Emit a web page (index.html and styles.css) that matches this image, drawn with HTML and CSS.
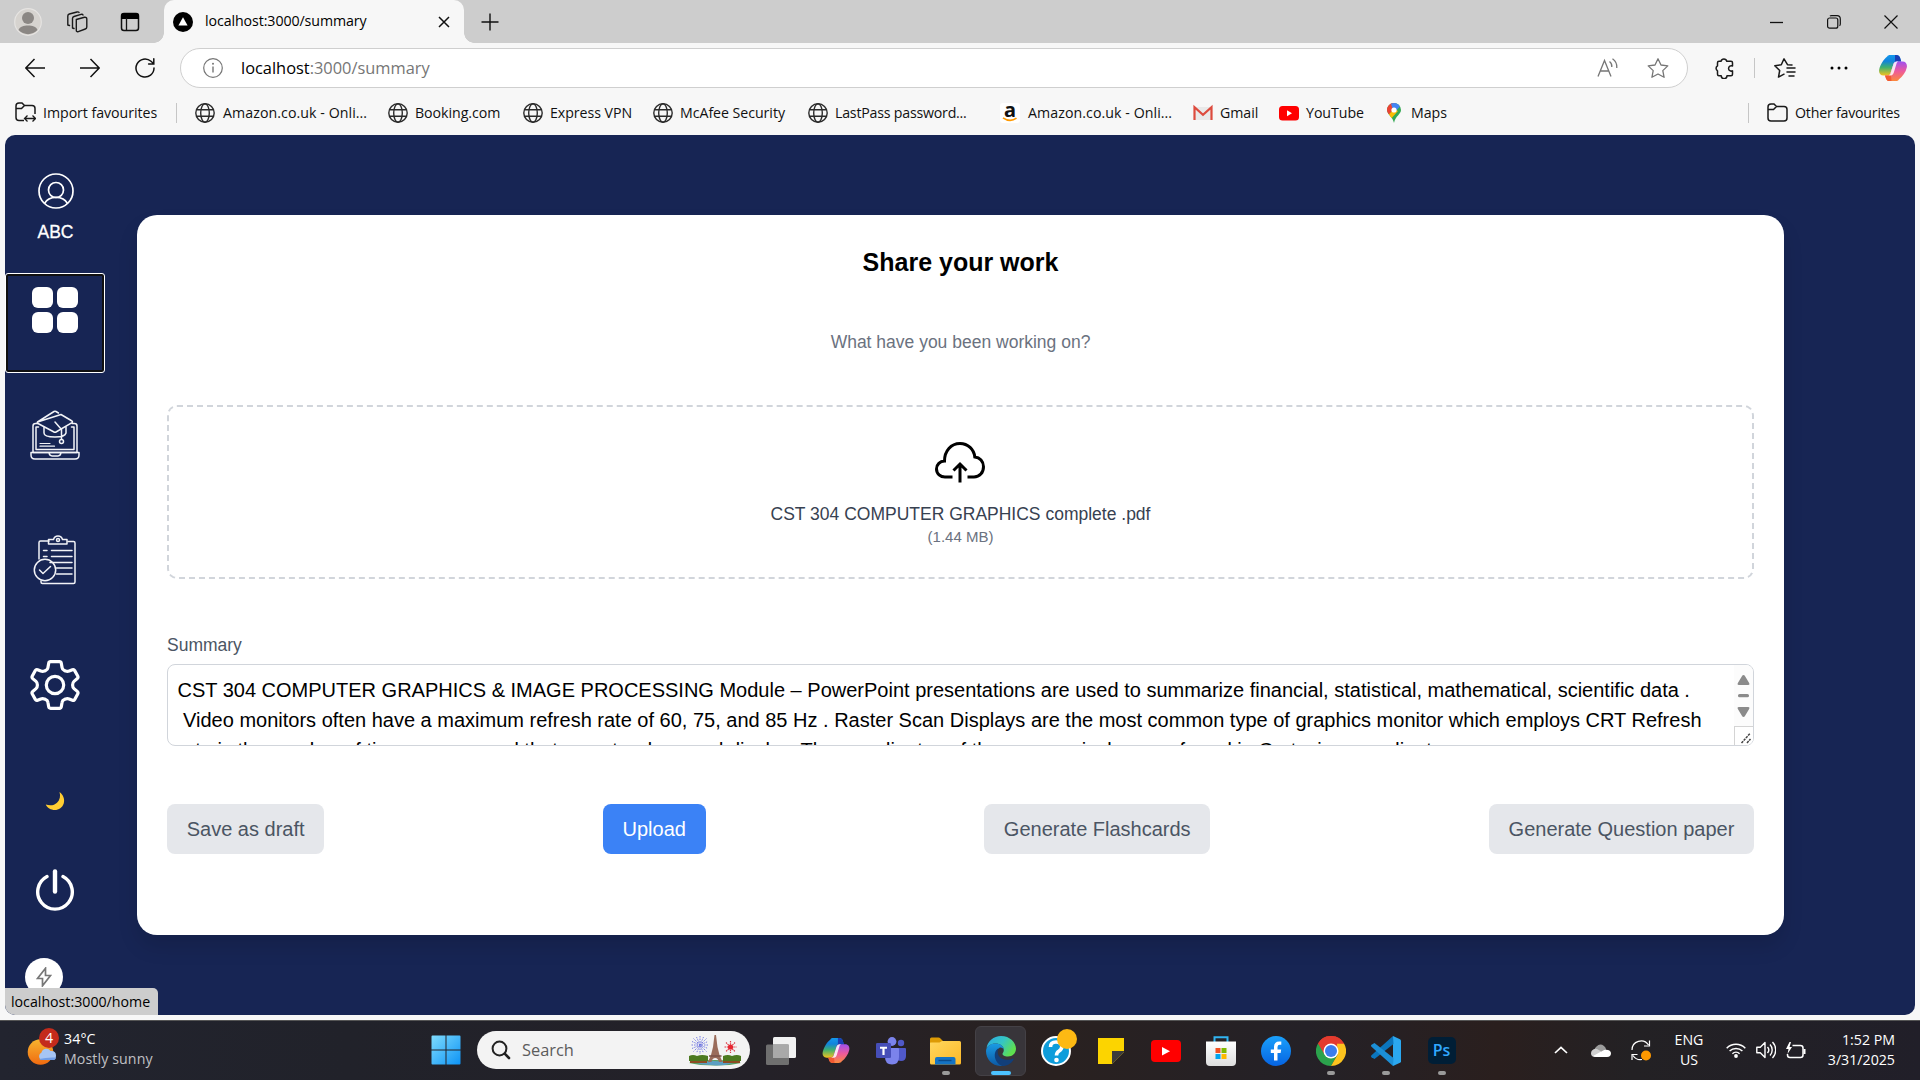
FILE: index.html
```html
<!DOCTYPE html>
<html lang="en">
<head>
<meta charset="utf-8">
<title>localhost:3000/summary</title>
<link rel="stylesheet" href="styles.css">
</head>
<body>
<svg class="defs" width="0" height="0">
  <defs>
    <linearGradient id="cpA" x1="0" y1="0" x2="0" y2="1"><stop offset="0" stop-color="#1398ec"/><stop offset=".3" stop-color="#1183dc"/><stop offset=".6" stop-color="#3fb070"/><stop offset="1" stop-color="#f4c21c"/></linearGradient>
    <linearGradient id="cpB" x1="0" y1="0" x2="0" y2="1"><stop offset="0" stop-color="#a050ee"/><stop offset=".5" stop-color="#ee5a9b"/><stop offset="1" stop-color="#fb8a3c"/></linearGradient>
    <linearGradient id="win" x1="0" y1="0" x2="1" y2="1"><stop offset="0" stop-color="#7fdcfd"/><stop offset="1" stop-color="#0d93f5"/></linearGradient>
    <linearGradient id="fold" x1="0" y1="0" x2="1" y2="1"><stop offset="0" stop-color="#ffd75e"/><stop offset="1" stop-color="#fdb928"/></linearGradient>
    <linearGradient id="edgeA" x1="0" y1="0" x2="1" y2=".5"><stop offset="0" stop-color="#2aa9e6"/><stop offset=".55" stop-color="#35c5c4"/><stop offset="1" stop-color="#5fe04f"/></linearGradient>
    <linearGradient id="edgeB" x1="0" y1="0" x2="0" y2="1"><stop offset="0" stop-color="#1a9be4"/><stop offset="1" stop-color="#0c59a4"/></linearGradient>
    <linearGradient id="sun" x1="0" y1="0" x2="0" y2="1"><stop offset="0" stop-color="#f7b52f"/><stop offset="1" stop-color="#f06a10"/></linearGradient>
    <linearGradient id="fb" x1="0" y1="0" x2="0" y2="1"><stop offset="0" stop-color="#1aa0fb"/><stop offset="1" stop-color="#0664e2"/></linearGradient>
    <linearGradient id="bag" x1="0" y1="0" x2="0" y2="1"><stop offset="0" stop-color="#fff"/><stop offset="1" stop-color="#dedede"/></linearGradient>
    <symbol id="globe" viewBox="0 0 20 20"><g fill="none" stroke="#2b2b2b" stroke-width="1.4"><circle cx="10" cy="10" r="9.2"/><ellipse cx="10" cy="10" rx="4.3" ry="9.2"/><path d="M1.5 6.7h17M1.5 13.3h17"/></g></symbol>
    <symbol id="copilot" viewBox="0 0 28 26">
      <path d="M8.200 1.500c.5-1 1.500-1.500 3-1.500h6.300c1.900 0 2.900.9 3.500 2.600l1.200 4h-4.300c-2 0-2.900.8-3.400 2.500l-2.800 8.600c-.6 2-1.700 2.800-3.600 2.800H4.500C1.300 20.500-.5 18 .2 14.600 1.200 10 4.300 4.500 8.200 1.500z" fill="url(#cpA)"/>
      <path d="M16 0h1.500c1.900 0 2.900.9 3.500 2.600l1.200 4h-4.300c-.7 0-1.400.1-1.900.5z" fill="#1a3fb5"/>
      <path d="M19.800 24.500c-.5 1-1.500 1.500-3 1.500h-6.300c-1.900 0-2.900-.9-3.500-2.600l-1-2.900h2.100c1.900 0 3-.8 3.600-2.800l2.800-8.600c.5-1.700 1.400-2.500 3.400-2.500h5.600c3.200 0 5 2.500 4.300 5.900-1 4.600-4.100 9-8 12z" fill="url(#cpB)"/>
      <path d="M6 20.500h2.100c1.900 0 3-.8 3.600-2.800L12.500 26h-2c-1.900 0-2.900-.9-3.500-2.600z" fill="#f25a32"/>
      <path d="M15.800 7.300c.6-.5 1.200-.7 2.100-.7h1.300c-1 .6-1.500 1.300-1.800 2.500l-2.500 8.200c-.6 2-1.500 3.200-3.200 3.200H8.400c1.700 0 2.700-.9 3.300-2.800l2.800-8.600c.3-.9.700-1.500 1.300-1.800z" fill="#fff" opacity=".85"/>
    </symbol>
  </defs>
</svg>
<div class="screen">
  <header class="tabstrip">
    <svg class="ic-profile" width="28" height="28" viewBox="0 0 28 28"><circle cx="14" cy="14" r="13.300" fill="#d6d3cf" stroke="#e6e4e2" stroke-width="1.2"/><circle cx="14" cy="10" r="6" fill="#8b8784"/><path d="M4.500 22c1.500-3.500 5-4.500 9.500-4.500s8 1 9.500 4.500a13 13 0 0 1-19 0z" fill="#8b8784"/></svg>
    <svg class="ic-work" width="22" height="22" viewBox="0 0 22 22" fill="none" stroke="#1a1a1a" stroke-width="1.400" stroke-linejoin="round" stroke-linecap="round"><path d="M10.300 8.500 18.500 6.300Q20.800 6 20.800 8v8q0 1.500-1.500 2l-7 2.600q-2 .6-2-1.400z"/><path d="M8 17.500 6.500 17V7.500q0-1.500 1.500-2l7-2.200q1.500-.5 2 .8"/><path d="M3.500 14.500 1.800 14V5q0-1.500 1.500-2L11 1q1.500-.4 2 .4"/></svg>
    <svg class="ic-vtab" width="20" height="20" viewBox="0 0 20 20"><rect x="1.500" y="1.500" width="17" height="17" rx="2.500" fill="none" stroke="#111" stroke-width="1.500"/><path d="M1 7V4q0-3 3-3h12q3 0 3 3v3z" fill="#000"/><path d="M6.500 6v12.500" stroke="#111" stroke-width="1.300"/></svg>
    <div class="tab">
      <svg width="20" height="20" viewBox="0 0 20 20"><circle cx="10" cy="10" r="10" fill="#000"/><path d="M10 5.300 14.600 13.500H5.400z" fill="#fff"/></svg>
      <span class="ui tab-title">localhost:3000/summary</span>
      <svg class="tab-x" width="12" height="12" viewBox="0 0 12 12"><path d="M1 1l10 10M11 1 1 11" stroke="#111" stroke-width="1.500"/></svg>
    </div>
    <svg class="ic-plus" width="18" height="18" viewBox="0 0 18 18"><path d="M9 .5v17M.5 9h17" stroke="#111" stroke-width="1.400"/></svg>
    <div class="winctl">
      <svg width="14" height="14" viewBox="0 0 14 14"><path d="M0 7.500h13" stroke="#111" stroke-width="1.300"/></svg>
      <svg width="14" height="14" viewBox="0 0 14 14" fill="none" stroke="#111" stroke-width="1.200"><rect x=".6" y="3" width="10.200" height="10.200" rx="2"/><path d="M3 1.200q.5-.6 1.500-.6H10q3.300 0 3.300 3.300V9q0 1.200-.8 1.800"/></svg>
      <svg width="14" height="14" viewBox="0 0 14 14"><path d="M.5.5l13 13M13.500.5l-13 13" stroke="#111" stroke-width="1.200"/></svg>
    </div>
  </header>

  <div class="toolbar">
    <svg width="20" height="20" viewBox="0 0 20 20" fill="none" stroke="#111" stroke-width="1.500"><path d="M20 10H1M9.500 1 .8 10l8.700 9"/></svg>
    <svg width="20" height="20" viewBox="0 0 20 20" fill="none" stroke="#111" stroke-width="1.500"><path d="M0 10h19M10.500 1l8.700 9-8.700 9"/></svg>
    <svg width="20" height="20" viewBox="0 0 20 20" fill="none" stroke="#111" stroke-width="1.500" stroke-linecap="round"><path d="M19 10a9 9 0 1 1-3-6.700L18.500 5.500M18.800.8v5.100h-5.200"/></svg>
    <div class="address">
      <svg width="20" height="20" viewBox="0 0 20 20"><circle cx="10" cy="10" r="9.300" fill="none" stroke="#767676" stroke-width="1.200"/><path d="M10 8.500v6" stroke="#767676" stroke-width="1.400"/><circle cx="10" cy="5.800" r="1" fill="#767676"/></svg>
      <span class="ui url"><b>localhost</b>:3000/summary</span>
      <svg class="read" width="22" height="20" viewBox="0 0 22 20" fill="none" stroke="#767676" stroke-width="1.300"><path d="M1 18.500 7.500 2.500 14 18.500M3.300 13h8.400"/><path d="M12.500 3.500a6 6 0 0 1 2.300 5.500M15.500.8a10 10 0 0 1 4.300 9.200"/></svg>
      <svg width="22" height="20" viewBox="0 0 22 20" fill="none" stroke="#767676" stroke-width="1.300" stroke-linejoin="round"><path d="M11 .8l3 6.200 6.800.9-5 4.700 1.300 6.700L11 16l-6.100 3.300 1.300-6.700-5-4.700L8 7z"/></svg>
    </div>
    <svg class="ext" width="22" height="22" viewBox="0 0 22 22" fill="none" stroke="#1a1a1a" stroke-width="1.500" stroke-linejoin="round"><path d="M7 4.300a3 3 0 0 1 5.800 0H17q1.500 0 1.500 1.500V9a2.700 2.700 0 1 0 0 4.800v3.500q0 1.500-1.500 1.500h-4a2.900 2.900 0 0 1-5.800 0H5q-1.500 0-1.500-1.500v-3.500a2.900 2.900 0 0 1 0-5V5.800q0-1.500 1.500-1.500z"/></svg>
    <i class="vline"></i>
    <svg class="favs" width="22" height="20" viewBox="0 0 22 20" fill="none" stroke="#1a1a1a" stroke-width="1.500" stroke-linejoin="round" stroke-linecap="round"><path d="M18 7l-4.500-.3L10 .8 7.300 6.800.8 7.800l4.900 4.700-1.200 6.600L10 16.200"/><path d="M13 10h8M13 14h8M15 18h5"/></svg>
    <svg class="dots" width="18" height="4" viewBox="0 0 18 4"><circle cx="2" cy="2" r="1.500"/><circle cx="9" cy="2" r="1.500"/><circle cx="16" cy="2" r="1.500"/></svg>
    <svg class="cop" width="28" height="26"><use href="#copilot"/></svg>
  </div>

  <nav class="bookmarks ui">
    <a class="bm"><svg width="21" height="21" viewBox="0 0 21 21" fill="none" stroke="#1a1a1a" stroke-width="1.500"><path d="M9 18.500H4q-3 0-3-3V4q0-3 3-3h3l2.500 2.500H17q3 0 3 3V12M1 6.500h5.500L9.500 3.500"/><path d="M10 16.500h10.500M12.500 13.500l-3 3 3 3M17.500 13.500l3 3-3 3" stroke-width="1.300"/></svg>Import favourites</a>
    <i class="vline"></i>
    <a class="bm wide"><svg width="20" height="20"><use href="#globe"/></svg>Amazon.co.uk - Onli...</a>
    <a class="bm"><svg width="20" height="20"><use href="#globe"/></svg>Booking.com</a>
    <a class="bm"><svg width="20" height="20"><use href="#globe"/></svg>Express VPN</a>
    <a class="bm"><svg width="20" height="20"><use href="#globe"/></svg>McAfee Security</a>
    <a class="bm narrow"><svg width="20" height="20"><use href="#globe"/></svg>LastPass password...</a>
    <a class="bm wide"><span class="amz">a<svg width="16" height="5" viewBox="0 0 16 5"><path d="M1 .8q7 5 13.500.4" fill="none" stroke="#f90" stroke-width="1.600"/></svg></span>Amazon.co.uk - Onli...</a>
    <a class="bm"><svg width="20" height="20" viewBox="0 0 20 20"><path d="M2 4h16v13H2z" fill="#e9e9e9"/><path d="M1.500 17V4.300L10 11.800 18.500 4.300V17" fill="none" stroke="#dd4b3e" stroke-width="2.200"/></svg>Gmail</a>
    <a class="bm"><svg width="20" height="20" viewBox="0 0 20 20"><rect y="3" width="20" height="14.500" rx="3.500" fill="#f00"/><path d="M8 7.200v6l5-3z" fill="#fff"/></svg>YouTube</a>
    <a class="bm maps"><svg width="14" height="20" viewBox="0 0 14 20"><path d="M7 0a7 7 0 0 1 7 7c0 4-5.500 6-7 13C6 14 0 11.500 0 7a7 7 0 0 1 7-7z" fill="#34a853"/><path d="M1.600 2.500A7 7 0 0 1 9 .3L2.500 12C1 10 0 9 0 7q0-2.700 1.600-4.500z" fill="#ea4335"/><path d="M4 .7A7 7 0 0 1 13 3.500L7 10z" fill="#4285f4"/><path d="M2 11.300 7 6l4 2-6.500 7.300z" fill="#fbbc04"/><circle cx="7" cy="7" r="2.600" fill="#fff"/></svg>Maps</a>
    <span></span>
    <i class="vline"></i>
    <a class="bm narrow"><svg width="21" height="19" viewBox="0 0 21 19" fill="none" stroke="#1a1a1a" stroke-width="1.500"><path d="M1 15V4q0-3 3-3h3l2.500 2.500H17q3 0 3 3V15q0 3-3 3H4q-3 0-3-3zM1 6.500h5.500L9.500 3.500"/></svg>Other favourites</a>
  </nav>

  <main class="page">
    <aside class="side">
      <div class="user">
        <svg width="36" height="36" viewBox="0 0 36 36" fill="none" stroke="#fff" stroke-width="1.700"><circle cx="18" cy="18" r="17"/><circle cx="18" cy="17" r="7.500"/><path d="M6.500 30.500C8.500 26.500 13 24.300 18 24.300s9.500 2.200 11.500 6.200"/></svg>
        <span>ABC</span>
      </div>
      <a class="nav focus"><svg width="50" height="50" viewBox="0 0 50 50" fill="#fff"><rect x="2" y="2" width="21" height="21" rx="6"/><rect x="27" y="2" width="21" height="21" rx="6"/><rect x="2" y="27" width="21" height="21" rx="6"/><rect x="27" y="27" width="21" height="21" rx="6"/></svg></a>
      <a class="nav"><svg width="50" height="50" viewBox="0 0 50 50" fill="none" stroke="#f2f3f7" stroke-width="1.500" stroke-linejoin="round" stroke-linecap="round"><path d="M8 13.500H5.500Q3 13.500 3 16v26.500h44V16q0-2.500-2.500-2.500H42"/><path d="M8.500 17H6v22.500h38V17h-2.500"/><path d="M1 42.500v2.500q0 4 4 4h40q4 0 4-4v-2.500zM19 42.700q.5 3.200 3 3.200h6q2.500 0 3-3.200"/><path d="M7.500 12 24 1.500q1-.6 2 0l2.500 1.500M31 4.500 42 11q1 .8 0 1.600L26 22q-1 .6-2 0L8 13.500q-1.200-.8-.5-1.500z"/><path d="M14 17v6q0 4 11 4 10 0 11-4v-6M25 12l6.500 7.500V29"/><circle cx="31.500" cy="31.500" r="2"/><path d="M10 33.500h10M10 36.200h14.500M6.500 39.500h6" stroke-width="1.200"/></svg></a>
      <a class="nav"><svg width="50" height="50" viewBox="0 0 50 50" fill="none" stroke="#f2f3f7" stroke-width="1.500" stroke-linejoin="round" stroke-linecap="round"><path d="M19 6H10.500Q9 6 9 7.500V24M11 46v1q0 1.500 1.500 1.500h31q1.500 0 1.500-1.500V8q0-1.500-1.500-1.500H38"/><path d="M18.500 4.500h5q1-3.500 4.500-3.500t4.500 3.500h4.500V9H18.500z"/><circle cx="28" cy="5" r="1.500"/><path d="M13.500 15.500h3.500M21.500 15.500H42M13.500 21.500h3.500M21.500 21.500H42M20 27.500h22M26.500 33h15.500M26.500 39h15.500"/><circle cx="15" cy="35" r="10.700"/><path d="M9.500 35l3.500 3.500 7.500-7"/></svg></a>
      <a class="nav"><svg width="50" height="50" viewBox="0 0 50 50" fill="none" stroke="#fff" stroke-width="3.200" stroke-linejoin="round"><circle cx="25" cy="25" r="8.700"/><path d="M20.500 1.700h9q1.500 0 1.800 1.500l.8 4.500q.3 2 2.300 2.800l1.200.6q1.800.7 3.600 0l3.200-1.300q1.500-.6 2.300.8l3 5.500q.8 1.500-.4 2.500l-3.300 2.800q-1.400 1.200-1.400 3.600 0 2.400 1.400 3.600l3.300 2.800q1.200 1 .4 2.500l-3 5.500q-.8 1.400-2.300.8l-3.200-1.300q-1.800-.7-3.600 0l-1.200.6q-2 .8-2.300 2.800l-.8 4.500q-.3 1.500-1.800 1.500h-9q-1.500 0-1.800-1.500l-.8-4.500q-.3-2-2.300-2.800l-1.200-.6q-1.800-.7-3.600 0l-3.200 1.300q-1.500.6-2.300-.8l-3-5.500q-.8-1.500.4-2.500l3.300-2.800q1.400-1.200 1.400-3.600 0-2.400-1.400-3.600l-3.300-2.800q-1.200-1-.4-2.500l3-5.500q.8-1.400 2.300-.8l3.200 1.300q1.800.7 3.600 0l1.200-.6q2-.8 2.300-2.800l.8-4.500q.3-1.500 1.800-1.500z"/></svg></a>
      <svg class="moon" width="20" height="20" viewBox="0 0 20 20"><path d="M14.500 1C18 3.500 20 8 18.800 12.200 17.500 16.500 13.800 19 9.800 19 6 19 2 16.800.8 13.500c4 1.500 8.500 1 11.200-1.700C15 8.900 15.700 5 14.500 1z" fill="#ffcd32"/></svg>
      <svg class="power" width="40" height="44" viewBox="0 0 40 44" fill="none" stroke="#fff" stroke-linecap="round"><path d="M12 8.500a17.300 17.300 0 1 0 16 0" stroke-width="3.400"/><path d="M20 3.500v20" stroke-width="4.400"/></svg>
      <div class="bolt"><svg width="16" height="20" viewBox="0 0 16 20"><path d="M9.500 1.200 1.500 11.500h5v7.300l8-10.300h-5z" fill="none" stroke="#777" stroke-width="1.700"/></svg></div>
    </aside>
    <section class="card">
      <h1>Share your work</h1>
      <p class="sub">What have you been working on?</p>
      <div class="drop">
        <svg width="52" height="44" viewBox="0 0 52 44" fill="none" stroke="#000" stroke-width="3"><path d="M17.500 38H10C5.500 38 1.500 34.800 1.500 30 1.500 25.500 5 22.300 9.500 22 9.500 12 16 4.500 25 4.500c8 0 14 6 14.800 13.500 5 .5 8.700 4.500 8.700 9.700 0 6-4 10.300-9.500 10.300h-6.500"/><path d="M25 43.500V26M18.500 31.500 25 25l6.500 6.500"/></svg>
        <span class="file">CST 304 COMPUTER GRAPHICS complete .pdf</span>
        <span class="size">(1.44 MB)</span>
      </div>
      <span class="label">Summary</span>
      <div class="area">
        <div class="lines">CST 304 COMPUTER GRAPHICS &amp; IMAGE PROCESSING Module – PowerPoint presentations are used to summarize financial, statistical, mathematical, scientific data .
 Video monitors often have a maximum refresh rate of 60, 75, and 85 Hz . Raster Scan Displays are the most common type of graphics monitor which employs CRT Refresh
rate is the number of times per second that a spot redraw and display. The coordinates of the screen pixels are referred in Cartesian coordinates.</div>
        <div class="scroll">
          <svg width="19" height="51" viewBox="0 0 19 51" fill="#8b8b8b"><path d="M9.500 0q.8 0 1.300.8l4.500 7.500q.7 1.700-1 1.700H4.700q-1.700 0-1-1.700L8.200.8Q8.700 0 9.500 0zM9.500 42q.8 0 1.300-.8l4.500-7.500q.7-1.700-1-1.700H4.700q-1.700 0-1 1.700l4.500 7.500q.5.800 1.300.8z"/><rect x="4" y="19" width="11" height="3.300" rx="1.600"/></svg>
          <div class="grip"><svg width="12" height="12" viewBox="0 0 12 12" stroke="#444" stroke-width="1.500" stroke-dasharray="2.500 .8"><path d="M1.500 11 10 1.500M7 11l3.500-4"/></svg></div>
        </div>
      </div>
      <div class="actions">
        <button>Save as draft</button><button class="primary">Upload</button><button>Generate Flashcards</button><button>Generate Question paper</button>
      </div>
    </section>
    <div class="status ui">localhost:3000/home</div>
  </main>

  <footer class="taskbar ui">
    <div class="weather">
      <svg width="34" height="40" viewBox="0 0 34 40"><circle cx="13.500" cy="24" r="12.800" fill="url(#sun)"/><path d="M14 32a4.300 4.300 0 0 1 .5-7.500 5 5 0 0 1 9-1.500q5.500-.5 5.500 4.500 0 4.500-3 4.500z" fill="#a6c5f4"/><path d="M12 31q8-2 17-1.500-.5 2.500-3 2.500H14z" fill="#6f9de8"/></svg>
      <span class="badge">4</span>
      <div class="wtext"><div>34°C</div><div class="dim">Mostly sunny</div></div>
    </div>
    <div class="dock">
      <svg class="start" width="30" height="30" viewBox="0 0 30 30" fill="url(#win)"><path d="M.5 1.500q0-1 1-1h13v14H.5zM15.500.5h13q1 0 1 1v13h-14zM.5 15.500h14v14h-13q-1 0-1-1zM15.500 15.500h14v13q0 1-1 1h-13z"/></svg>
      <div class="search">
        <svg width="20" height="20" viewBox="0 0 20 20" fill="none" stroke="#222" stroke-linecap="round"><circle cx="8.500" cy="8.500" r="6.900" stroke-width="2"/><path d="M13.700 13.700 18 18" stroke-width="2.600"/></svg>
        <span>Search</span>
        <svg class="eiffel" width="52" height="32" viewBox="0 0 52 32"><path d="M0 29q6-3 26-3t26 3q-10 2.500-26 2.500T0 29z" fill="#5ba060"/><path d="M8 30q8-3 16-3 10 0 20 2-8 2.500-16 2.500z" fill="#5c9fc2"/><path d="M0 22q4-2 8 0 5-2 11 0v5H0zM34 22q5-2 9 0 5-2 9 0v5H34z" fill="#4c7a20"/><path d="M1 27h17v2H1zM34 27h17v2H34z" fill="#8d4d24"/><path d="M25.500 1h1.500l1.500 12 2 8 3 7h-3.500q-1-4-3.800-4t-3.800 4H19l3-7 2-8z" fill="#9a6c5b"/><path d="M20 22h12.500" stroke="#7a5147" stroke-width="1.500"/><g stroke="#6a71e0" stroke-width=".9" stroke-dasharray="1.500 1"><path d="M11 2v18M2.500 11h17M4.500 4.500l13 13M17.500 4.500l-13 13M7.500 3l7 16M14.500 3l-7 16M3 7.500l16 7M3 14.500l16-7"/></g><g stroke="#dd3b45" stroke-width="1.200"><path d="M41.500 7v12M35.500 13h12M37 8.500l9 9M46 8.500l-9 9" stroke-dasharray="1.500 .7"/></g><circle cx="41.500" cy="13" r="2.600" fill="#e8252f"/></svg>
      </div>
      <div class="app"><svg width="30" height="28" viewBox="0 0 30 28"><rect x="7" y="0" width="23" height="21" rx="1.500" fill="#f1f1f1"/><rect x="0" y="7.500" width="23" height="20.500" rx="1.500" fill="#6f6f6f"/><path d="M7 7.500h16V21H7z" fill="#a9a9a9"/></svg></div>
      <div class="app"><svg width="28" height="25"><use href="#copilot"/></svg></div>
      <div class="app"><svg width="30" height="28" viewBox="0 0 30 28"><circle cx="16" cy="4.500" r="4.400" fill="#7b83eb"/><circle cx="25" cy="6" r="3.200" fill="#5059c9"/><path d="M20 11h9q1 0 1 1v7q0 5-5 5-3 0-5-2z" fill="#5059c9"/><path d="M9 11h13q1 0 1 1v8q0 7.500-7 7.500T9 20z" fill="#7b83eb"/><rect x="0" y="6" width="15" height="15" rx="1.300" fill="#464eb8"/><path d="M4 9.800h7v2H8.600v6.200H6.400v-6.200H4z" fill="#fff"/></svg></div>
      <div class="app run"><svg width="31" height="28" viewBox="0 0 31 28"><path d="M0 2q0-1.500 1.500-1.500h7q1 0 2 1L13 4H26v6H0z" fill="#dd9b05"/><path d="M0 6q0-.5.500-.5h9L12 4h17.500q1.500 0 1.500 1.500V26q0 1.500-1.500 1.500h-28Q0 27.500 0 26z" fill="url(#fold)"/><path d="M5 22q0-2 2-2h16.500q2 0 2 2v5.500H5z" fill="#1474c4"/><path d="M8.500 23.500h13" stroke="#0a4c8c" stroke-width="1.400"/></svg></div>
      <div class="app active"><svg width="30" height="30" viewBox="0 0 30 30"><path d="M15 0c9 0 15 6.500 15 12.800 0 4.500-3.500 7.700-8 7.700-4 0-5.500-1.500-5.500-2.700 0-.8 1.300-1.500 1.300-3.800C17.800 10 14 7.500 9.500 7.500 5 7.500 2 10 .5 12 1.700 5.200 7.500 0 15 0z" fill="url(#edgeA)"/><path d="M.3 13C1.800 9.500 5.500 7.500 9.500 7.500c4.700 0 8.300 2.600 8.300 6.300-1-2-3-2.800-4.600-1.800-5 3-4.500 12 3.500 17.900C7.500 31 0 24 0 15z" fill="url(#edgeB)"/><path d="M12.500 12.300C6 16 8.500 27.500 16.500 30c5 0 9-3 11-6.300.5-1-.2-1.500-1-1-1 .5-3 1.100-5.500 1.100-6 0-9.700-4.200-9.300-8.300.1-1.200.4-2.300.8-3.200z" fill="#123f7a"/></svg></div>
      <div class="app help"><svg width="30" height="30" viewBox="0 0 30 30"><circle cx="15" cy="15" r="14" fill="#0e9ddb" stroke="#fff" stroke-width="2"/><path d="M9.500 11q0-5 5.500-5 5.800 0 5.800 4.600 0 3-3 4.700-2.300 1.400-2.300 4.200" fill="none" stroke="#fff" stroke-width="3.600"/><circle cx="15.500" cy="24" r="2.300" fill="#fff"/></svg><i></i></div>
      <div class="app"><svg width="26" height="26" viewBox="0 0 26 26"><path d="M0 0h26v14L14 26H0z" fill="#fcd400"/><path d="M14 13h12v1L14 26z" fill="#3b3b3b"/></svg></div>
      <div class="app"><svg width="30" height="22" viewBox="0 0 30 22"><rect width="30" height="22" rx="4" fill="#f00"/><path d="M11 7v8.500l8-4.200z" fill="#fff"/></svg></div>
      <div class="app"><svg width="30" height="30" viewBox="0 0 30 30"><path d="M8.500 6V1.300h13V6" fill="none" stroke="#31b4f0" stroke-width="2"/><path d="M0 5.500h30V26q0 4-4 4H4q-4 0-4-4z" fill="url(#bag)"/><path d="M9.500 12h5v5h-5z" fill="#f25022"/><path d="M15.500 12h5v5h-5z" fill="#7fba00"/><path d="M9.500 18h5v5h-5z" fill="#00a4ef"/><path d="M15.500 18h5v5h-5z" fill="#ffb900"/></svg></div>
      <div class="app"><svg width="30" height="30" viewBox="0 0 30 30"><circle cx="15" cy="15" r="15" fill="url(#fb)"/><path d="M13 24.500V17h-3.200v-3.500H13V11q0-5.500 5.300-5.500h2v3.200h-1.600q-2.200 0-2.200 2.300v2.500h3.700l-.6 3.500h-3.100v7.500z" fill="#fff"/></svg></div>
      <div class="app run"><svg width="30" height="30" viewBox="0 0 30 30"><path d="M2 7.500A15 15 0 0 1 28 7.500L15 15z" fill="#e33b2e"/><path d="M2 7.500A15 15 0 0 0 15 30l6.500-11.200L15 15z" fill="#2ba24c"/><path d="M28 7.500A15 15 0 0 1 15 30l6.500-11.200L21 7.500z" fill="#fcc31e"/><path d="M15 7.500h13A15 15 0 0 0 2 7.500l6.500 11z" fill="#e33b2e"/><circle cx="15" cy="15" r="7.500" fill="#fff"/><circle cx="15" cy="15" r="6" fill="#3b7ded"/></svg></div>
      <div class="app run"><svg width="30" height="30" viewBox="0 0 30 30"><path d="M22 0l7 3.200q1 .5 1 1.600v20.400q0 1.100-1 1.600L22 30z" fill="#2ba8f0"/><path d="M22.500 8 3.500 23 .5 21.200q-1-1 0-2L22 0z" fill="#0b75bd"/><path d="M22.500 22 3.500 7 .5 8.800q-1 1 0 2L22 30z" fill="#1c8fd6"/></svg></div>
      <div class="app run"><span class="ps">Ps</span></div>
    </div>
    <div class="tray">
      <svg width="14" height="8" viewBox="0 0 14 8"><path d="M1 7l6-5.700L13 7" fill="none" stroke="#fff" stroke-width="1.700"/></svg>
      <svg width="20" height="13" viewBox="0 0 20 13"><path d="M4 9a5.500 5.500 0 0 1 1.500-6.500Q9-1.200 13 2q2 1.500 2.200 4z" fill="#9c9c9c"/><path d="M1 6.500Q3 4.300 6 5l8 4.500-9 3.500Q0 13 0 9.500 0 7.500 1 6.500z" fill="#d0d0d0"/><path d="M2 12 13 6q6-1 7 3 0 4-4 4H5q-2 0-3-1z" fill="#fff"/></svg>
      <svg width="20" height="21" viewBox="0 0 20 21" fill="none" stroke="#fff" stroke-width="1.200"><path d="M1 10A9 9 0 0 1 17.500 5M18.500.500V6H13M1 20v-5.500h5.500M2 15.500a9 9 0 0 0 9 4"/><circle cx="15" cy="15.500" r="5" fill="#f90" stroke="none"/></svg>
      <div class="lang">ENG<br>US</div>
      <svg width="20" height="16" viewBox="0 0 20 16" fill="none" stroke="#fff" stroke-width="1.500"><path d="M.7 6.200a13.200 13.200 0 0 1 18.600 0M3.600 9a9.200 9.200 0 0 1 12.800 0M6.400 11.700a5.200 5.200 0 0 1 7.200 0"/><circle cx="10" cy="14" r="1.900" fill="#fff" stroke="none"/></svg>
      <svg width="20" height="18" viewBox="0 0 20 18" fill="none" stroke="#fff" stroke-width="1.400" stroke-linejoin="round"><path d="M.8 6.200h3.500L9 1.500v15l-4.700-4.700H.8z"/><path d="M11.500 6a4.500 4.500 0 0 1 0 6M14 3.500a8 8 0 0 1 0 11M16.500 1a11.500 11.500 0 0 1 0 16"/></svg>
      <svg width="20" height="17" viewBox="0 0 20 17" fill="none" stroke="#fff" stroke-width="1.500"><path d="M6.500 3.500H14.500q2.500 0 2.500 2.500v7q0 2.500-2.500 2.500H4q-2.500 0-2.500-2.500v-1"/><path d="M18.500 7v5" stroke-width="2"/><path d="M3.500 0 0 7h2.500L1.500 12 6 5H3.500L5 0z" fill="#fff" stroke="none"/></svg>
      <div class="clock">1:52 PM<br>3/31/2025</div>
    </div>
  </footer>
</div>
</body>
</html>
```
FILE: styles.css
```css
* { box-sizing: border-box; }
body { margin: 0; font-family: "Liberation Sans", Arial, sans-serif; }
svg { display: block; flex: none; }
.defs { position: absolute; }
.ui { font-family: "Open Sans", "Noto Sans", sans-serif; }
.screen { width: 1920px; height: 1080px; display: flex; flex-direction: column; overflow: hidden; background: #f7f7f7; }

.tabstrip { height: 43px; flex: none; display: flex; align-items: center; background: #cdcdcd; padding-left: 14px; }
.ic-work { margin-left: 24px; }
.ic-vtab { margin-left: 32px; }
.tab { width: 300px; height: 43px; margin-left: 24px; padding: 0 14px 0 9px; display: flex; align-items: center; background: #f7f7f7; border-radius: 10px 10px 0 0; position: relative; }
.tab::before, .tab::after { content: ""; position: absolute; bottom: 0; width: 10px; height: 10px; }
.tab::before { left: -10px; background: radial-gradient(circle at 0 0, #cdcdcd 9.5px, #f7f7f7 10px); }
.tab::after { right: -10px; background: radial-gradient(circle at 100% 0, #cdcdcd 9.5px, #f7f7f7 10px); }
.tab-title { margin-left: 12px; padding-bottom: 2px; font-size: 14.2px; letter-spacing: -.08px; }
.tab-x { margin-left: auto; }
.ic-plus { margin-left: 17px; }
.winctl { margin-left: auto; display: flex; gap: 43px; padding-right: 22px; }

.toolbar { height: 50px; flex: none; display: flex; align-items: center; padding-left: 25px; }
.toolbar > svg + svg { margin-left: 35px; }
.address { width: 1508px; height: 40px; margin-left: 25px; border: 1px solid #cfcfcf; border-radius: 20px; background: #fff; display: flex; align-items: center; padding: 0 18px 0 22px; }
.url { margin-left: 18px; padding-bottom: 2px; font-size: 16.4px; color: #767676; }
.url b { font-weight: 400; color: #000; }
.read { margin-left: auto; margin-right: 28px; }
.vline { width: 1px; height: 20px; background: #c6c6c6; }
.ext { margin-left: 26px; }
.toolbar .vline { margin-left: 18px; }
.favs { margin-left: 19px; }
.toolbar > .dots { margin-left: 34px; }
.toolbar > .cop { margin-left: 31px; }

.bookmarks { height: 42px; flex: none; display: grid; align-items: center; font-size: 14.2px; color: #111; padding: 0 0 3px 15px; letter-spacing: -.05px;
  grid-template-columns: 161px 19px 193px 135px 130px 155px 192px 193px 86px 107px 77px 285px 19px 140px; }
.bm { display: flex; align-items: center; gap: 7px; white-space: nowrap; }
.wide { gap: 8px; letter-spacing: .06px; }
.narrow { letter-spacing: -.22px; }
.maps { gap: 10px; padding-left: 1px; }
.amz { width: 20px; height: 20px; background: #fff; border-radius: 3px; font: bold 20px/14px "Noto Sans", sans-serif; display: flex; flex-direction: column; align-items: center; }

.page { height: 880px; flex: none; margin: 0 5px; background: #172554; border-radius: 10px; position: relative; display: flex; overflow: hidden; }
.side { width: 100px; display: flex; flex-direction: column; align-items: center; padding-top: 38px; }
.user { height: 100px; padding-left: 1px; display: flex; flex-direction: column; align-items: center; gap: 13px; color: #fff; font-size: 17.5px; line-height: 20px; -webkit-text-stroke: .3px #fff; }
.nav { width: 100px; height: 100px; margin-bottom: 25px; display: flex; justify-content: center; padding-top: 12px; flex: none; }
.focus { border: 1px solid #fff; border-radius: 3px; box-shadow: inset 0 0 0 2px #101010; padding-top: 11px; }
.moon { margin-top: 18px; }
.power { margin-top: 57px; }
.bolt { width: 38px; height: 38px; margin: 46px 22px 0 0; border-radius: 50%; background: #fff; display: flex; align-items: center; justify-content: center; flex: none; }
.status { position: absolute; left: 0; bottom: 0; width: 153px; height: 27px; padding-left: 6px; background: #cdcdcd; border-radius: 0 5px 0 9px; font-size: 14.2px; line-height: 27px; color: #000; }

.card { width: 1647px; height: 720px; margin: 80px 0 0 32px; padding: 30px; background: #fff; border-radius: 20px; box-shadow: 0 12px 20px rgba(0,0,0,.12); display: flex; flex-direction: column; }
h1 { margin: 0; font-size: 25px; line-height: 35px; text-align: center; }
.sub { margin: 50px 0 0; font-size: 17.5px; line-height: 25px; text-align: center; color: #6b7280; }
.drop { height: 174px; margin-top: 50px; border: 2px dashed #d1d5db; border-radius: 10px; display: flex; flex-direction: column; align-items: center; padding-top: 32px; flex: none; }
.file { margin-top: 19px; font-size: 17.5px; line-height: 25px; color: #374151; }
.size { font-size: 15px; line-height: 20px; color: #6b7280; }
.label { margin-top: 54px; font-size: 17.5px; line-height: 25px; color: #4b5563; }
.area { height: 82px; margin-top: 6px; border: 1px solid #d1d5db; border-radius: 8px; display: flex; justify-content: space-between; overflow: hidden; flex: none; }
.lines { padding: 10px 0 0 9.5px; font-size: 20px; line-height: 30px; white-space: pre; color: #000; flex: 1; }
.scroll { width: 19px; flex: none; display: flex; flex-direction: column; padding-top: 10px; background: #fcfcfc; }
.grip { width: 19px; height: 19px; border: solid #d4d4d4; border-width: 1px 0 0 1px; display: flex; align-items: flex-end; justify-content: flex-end; padding: 0 1px 1px 0; background: #fff; flex: none; }
.actions { margin-top: 58px; display: flex; justify-content: space-between; }
button { height: 50px; padding: 0 19.7px; border: 0; border-radius: 8px; background: #e5e7eb; color: #4b5563; font: 20px "Liberation Sans", Arial, sans-serif; }
.primary { background: #3b82f6; color: #fff; }

.taskbar { height: 60px; flex: none; margin-top: 5px; border-top: 1px solid #555; background: linear-gradient(90deg, #22242f 0, #21222a 18%, #242128 40%, #292120 55%, #242127 68%, #2a1f1e 78%, #232124 85%, #211f29 100%); display: flex; color: #fff; font-size: 14.2px; line-height: 20px; }
.weather { width: 431px; display: flex; padding: 7px 0 0 27px; gap: 3px; position: relative; }
.wtext { padding-top: 1px; letter-spacing: .1px; }
.dim { color: #c0c0c4; }
.badge { position: absolute; left: 39px; top: 7px; width: 20px; height: 20px; border-radius: 50%; background: #c42b1c; text-align: center; line-height: 19px; }
.dock { display: flex; align-items: center; }
.start, .search { margin-bottom: 1px; }
.search { width: 273px; height: 38px; margin-left: 16px; margin-right: 3px; border-radius: 19px; background: #f3f3f3; color: #5c5c5c; display: flex; align-items: center; padding: 0 9px 0 14px; font-size: 16.4px; }
.search span { margin-left: 11px; }
.eiffel { margin-left: auto; }
.app { width: 55.1px; height: 50px; display: flex; align-items: center; justify-content: center; position: relative; flex: none; }
.app.active { width: 51px; margin: 0 2px; background: #38353a; border: 1px solid #444146; border-radius: 6px; }
.run::after, .active::after { content: ""; position: absolute; left: 50%; bottom: 1px; width: 8px; height: 4px; margin-left: -4px; border-radius: 2px; background: #9a9a9a; }
.active::after { width: 20px; margin-left: -10px; bottom: 0; background: #4cc2ff; }
.help i { position: absolute; left: 29px; top: 3px; width: 20px; height: 20px; border-radius: 50%; background: #fdb913; }
.ps { width: 28px; height: 27px; border-radius: 5px; background: #001e36; color: #31a8ff; font: 600 16px/26px "Open Sans", sans-serif; text-align: center; }
.tray { margin-left: auto; padding: 0 25px 1px 0; display: flex; align-items: center; }
.tray > svg { margin-right: 10px; }
.tray > svg:nth-child(1) { margin-right: 23px; }
.tray > svg:nth-child(2) { margin-right: 20px; }
.tray > svg:nth-child(3) { margin-right: 23px; }
.lang { width: 30px; margin-right: 22px; text-align: center; }
.clock { width: 79px; text-align: right; white-space: nowrap; padding-bottom: 1px; }
```
